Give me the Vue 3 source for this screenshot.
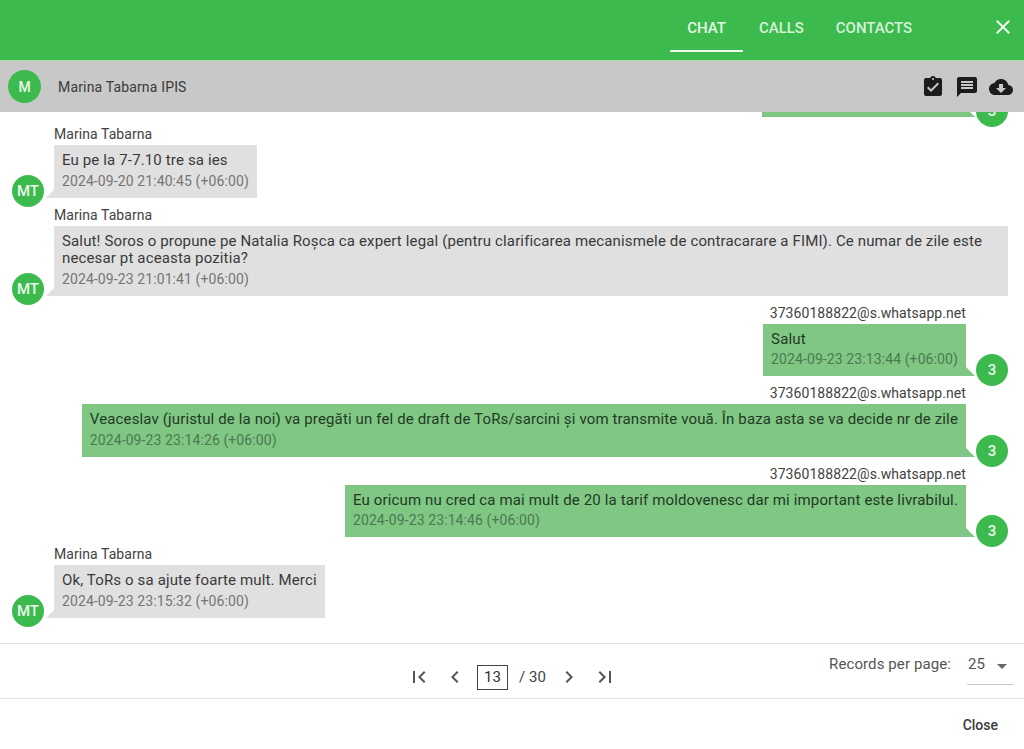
<script setup>
const messages = [
  { side: 'right', name: '', avatar: '3', lines: [], time: '', partial: true },
  { side: 'left', name: 'Marina Tabarna', avatar: 'MT', lines: ['Eu pe la 7-7.10 tre sa ies'], time: '2024-09-20 21:40:45 (+06:00)' },
  { side: 'left', name: 'Marina Tabarna', avatar: 'MT', lines: ['Salut! Soros o propune pe Natalia Roșca ca expert legal (pentru clarificarea mecanismele de contracarare a FIMI). Ce numar de zile este necesar pt aceasta pozitia?'], time: '2024-09-23 21:01:41 (+06:00)' },
  { side: 'right', name: '37360188822@s.whatsapp.net', avatar: '3', lines: ['Salut'], time: '2024-09-23 23:13:44 (+06:00)' },
  { side: 'right', name: '37360188822@s.whatsapp.net', avatar: '3', lines: ['Veaceslav (juristul de la noi) va pregăti un fel de draft de ToRs/sarcini și vom transmite vouă. În baza asta se va decide nr de zile'], time: '2024-09-23 23:14:26 (+06:00)' },
  { side: 'right', name: '37360188822@s.whatsapp.net', avatar: '3', lines: ['Eu oricum nu cred ca mai mult de 20 la tarif moldovenesc dar mi important este livrabilul.'], time: '2024-09-23 23:14:46 (+06:00)' },
  { side: 'left', name: 'Marina Tabarna', avatar: 'MT', lines: ['Ok, ToRs o sa ajute foarte mult. Merci'], time: '2024-09-23 23:15:32 (+06:00)' }
]
const icons = {
  close: 'M19 6.41L17.59 5 12 10.59 6.41 5 5 6.41 10.59 12 5 17.59 6.41 19 12 13.41 17.59 19 19 17.59 13.41 12z',
  task: 'M19 3h-4.18C14.4 1.84 13.3 1 12 1c-1.3 0-2.4.84-2.82 2H5c-1.1 0-2 .9-2 2v14c0 1.1.9 2 2 2h14c1.1 0 2-.9 2-2V5c0-1.1-.9-2-2-2zm-7 0c.55 0 1 .45 1 1s-.45 1-1 1-1-.45-1-1 .45-1 1-1zm-2 14l-4-4 1.41-1.41L10 14.17l6.59-6.59L18 9l-8 8z',
  message: 'M20 2H4c-1.1 0-1.99.9-1.99 2L2 22l4-4h14c1.1 0 2-.9 2-2V4c0-1.1-.9-2-2-2zm-2 12H6v-2h12v2zm0-3H6V9h12v2zm0-3H6V6h12v2z',
  cloud: 'M19.35 10.04C18.67 6.59 15.64 4 12 4 9.11 4 6.6 5.64 5.35 8.04 2.34 8.36 0 10.91 0 14c0 3.31 2.69 6 6 6h13c2.76 0 5-2.24 5-5 0-2.64-2.05-4.78-4.65-4.96zM17 13l-5 5-5-5h3V9h4v4h3z',
  first: 'M18.41 16.59L13.82 12l4.59-4.59L17 6l-6 6 6 6zM6 6h2v12H6z',
  prev: 'M15.41 7.41L14 6l-6 6 6 6 1.41-1.41L10.83 12z',
  next: 'M10 6L8.59 7.41 13.17 12l-4.58 4.59L10 18l6-6z',
  last: 'M5.59 7.41L10.18 12l-4.59 4.59L7 18l6-6-6-6zM16 6h2v12h-2z',
  drop: 'M7 10l5 5 5-5z'
}
</script>

<template>
  <div class="dialog">
    <header class="topbar">
      <nav class="tabs">
        <a class="tab active">Chat</a>
        <a class="tab">Calls</a>
        <a class="tab">Contacts</a>
      </nav>
      <svg class="close-icon" viewBox="0 0 24 24"><path :d="icons.close" /></svg>
    </header>

    <div class="subbar">
      <span class="avatar sub-avatar">M</span>
      <span class="sub-title">Marina Tabarna IPIS</span>
      <div class="sub-actions">
        <svg viewBox="0 0 24 24"><path :d="icons.task" /></svg>
        <svg viewBox="0 0 24 24"><path :d="icons.message" /></svg>
        <svg viewBox="0 0 24 24"><path :d="icons.cloud" /></svg>
      </div>
    </div>

    <main class="messages">
      <div v-for="(m, i) in messages" :key="i" class="row" :class="[m.side, { partial: m.partial }]">
        <div v-if="m.partial" class="line">
          <div class="bubble stub"></div>
          <span class="avatar">{{ m.avatar }}</span>
        </div>
        <template v-else>
          <div class="name">{{ m.name }}</div>
          <div class="line">
            <span v-if="m.side === 'left'" class="avatar">{{ m.avatar }}</span>
            <div class="bubble">
              <div class="text">{{ m.lines[0] }}</div>
              <div class="time">{{ m.time }}</div>
            </div>
            <span v-if="m.side === 'right'" class="avatar">{{ m.avatar }}</span>
          </div>
        </template>
      </div>
    </main>

    <div class="pager">
      <div class="pages">
        <svg class="first" viewBox="0 0 24 24"><path :d="icons.first" /></svg>
        <svg class="prev" viewBox="0 0 24 24"><path :d="icons.prev" /></svg>
        <span class="page-box">13</span>
        <span class="page-total">/ 30</span>
        <svg class="next" viewBox="0 0 24 24"><path :d="icons.next" /></svg>
        <svg class="last" viewBox="0 0 24 24"><path :d="icons.last" /></svg>
      </div>
      <div class="per-page">
        <span class="per-label">Records per page:</span>
        <div class="select">
          <span>25</span>
          <svg viewBox="0 0 24 24"><path :d="icons.drop" /></svg>
        </div>
      </div>
    </div>

    <footer class="actions">
      <button class="close-btn">Close</button>
    </footer>
  </div>
</template>

<style scoped>
.dialog {
  width: 1024px;
  height: 749px;
  display: flex;
  flex-direction: column;
  overflow: hidden;
  background: #fff;
  font-family: Roboto, "Liberation Sans", sans-serif;
  color: #333;
}
.topbar {
  flex: 0 0 61px;
  box-sizing: border-box;
  background: #3dba4e;
  display: flex;
  justify-content: flex-end;
  align-items: flex-start;
  border-bottom: 1px solid #a5dfad;
}
.tabs {
  display: flex;
  margin-right: 63px;
}
.tab {
  display: flex;
  align-items: center;
  justify-content: center;
  height: 52px;
  padding: 6px 16px 0;
  box-sizing: border-box;
  font-size: 15px;
  font-weight: 500;
  letter-spacing: -0.05px;
  text-transform: uppercase;
  color: #d6f3da;
  border-bottom: 2px solid transparent;
}
.tab.active {
  color: #e6f9e8;
  border-bottom-color: #eef9ef;
  width: 73px;
}
.close-icon {
  width: 24px;
  height: 24px;
  fill: #eefaf0;
  margin: 15px 9px 0 0;
}
.subbar {
  flex: 0 0 51px;
  background: #c8c8c8;
  display: flex;
  align-items: center;
  padding: 0 11px 0 8px;
  position: relative;
  z-index: 2;
}
.sub-title {
  margin-left: 17px;
  font-size: 14px;
  letter-spacing: 0.16px;
  color: #3a3a3a;
}
.sub-actions {
  margin-left: auto;
  display: flex;
  gap: 10px;
  align-items: center;
}
.sub-actions svg {
  width: 24px;
  height: 24px;
  fill: #1c1c1c;
}
.avatar {
  flex: 0 0 32px;
  width: 32px;
  height: 32px;
  border-radius: 50%;
  background: #3dba4e;
  color: #e8f8ea;
  display: flex;
  align-items: center;
  justify-content: center;
  font-size: 15px;
  font-weight: 500;
}
.sub-avatar {
  flex-basis: 33px;
  width: 33px;
  height: 33px;
  font-size: 14px;
}
.messages {
  flex: 1 1 0;
  min-height: 0;
  overflow: hidden;
  padding: 0 16px 0 12px;
  border-bottom: 1px solid #e2e2e2;
}
.row { margin-top: 8px; }
.row.partial { margin-top: -46.7px; }
.name {
  height: 20px;
  line-height: 18px;
  font-size: 14px;
  letter-spacing: 0.07px;
  color: #424242;
}
.left .name { padding-left: 42px; }
.right .name {
  text-align: right;
  padding-right: 42px;
}
.line {
  display: flex;
  align-items: flex-end;
  gap: 10px;
}
.right .line { justify-content: flex-end; }
.line .avatar {
  position: relative;
  z-index: 1;
}
.left .line .avatar { margin-bottom: -9px; }
.right .line .avatar { margin-bottom: -10px; }
.bubble {
  position: relative;
  padding: 7px 8px 8px;
  box-sizing: border-box;
  min-height: 52.5px;
  font-size: 15px;
}
.left .bubble { background: #e0e0e0; }
.right .bubble { background: #80c784; }
.bubble.stub { width: 204px; min-height: 52px; }
.bubble::after {
  content: "";
  position: absolute;
  bottom: 0;
  width: 0;
  height: 0;
  border-style: solid;
}
.left .bubble::after {
  left: -8px;
  border-width: 0 0 8px 8px;
  border-color: transparent transparent #e0e0e0 transparent;
}
.right .bubble::after {
  right: -9px;
  border-width: 0 9px 9px 0;
  border-color: transparent transparent #80c784 transparent;
}
.text {
  line-height: 17.5px;
  letter-spacing: 0.14px;
  color: #3a3a3a;
}
.right .text { color: #213a24; }
.time {
  margin-top: 3px;
  line-height: 17px;
  font-size: 14px;
  letter-spacing: 0.1px;
  color: #757575;
}
.right .time { color: #4b7a50; }
.pager {
  flex: 0 0 55px;
  position: relative;
  display: flex;
  align-items: center;
  justify-content: center;
  border-bottom: 1px solid #e2e2e2;
  box-sizing: border-box;
  padding-top: 12px;
}
.pages {
  display: flex;
  align-items: center;
}
.pages svg {
  width: 24px;
  height: 24px;
  fill: #555;
}
.prev { margin-left: 12px; }
.page-box {
  margin-left: 10px;
  width: 31px;
  height: 25px;
  box-sizing: border-box;
  border: 1px solid #444;
  display: flex;
  align-items: center;
  justify-content: center;
  font-size: 15px;
  color: #333;
}
.page-total {
  margin-left: 11px;
  font-size: 15px;
  color: #444;
  letter-spacing: 0.1px;
}
.next { margin-left: 11px; }
.last { margin-left: 12px; }
.per-page {
  position: absolute;
  right: 10px;
  top: 0;
  display: flex;
  align-items: flex-start;
}
.per-label {
  margin-top: 11px;
  font-size: 15px;
  letter-spacing: 0.1px;
  color: #555;
}
.select {
  margin-left: 16px;
  width: 47px;
  height: 41px;
  box-sizing: border-box;
  border-bottom: 1px solid #c8c8c8;
  display: flex;
  align-items: flex-start;
  justify-content: space-between;
  padding: 11px 0 0 1px;
  font-size: 15px;
  letter-spacing: 0.1px;
  color: #555;
}
.select svg {
  width: 24px;
  height: 24px;
  fill: #666;
  margin-top: -1px;
}
.actions {
  flex: 0 0 50px;
  display: flex;
  justify-content: flex-end;
  align-items: center;
  padding: 2px 26px 0 0;
  box-sizing: border-box;
}
.close-btn {
  border: 0;
  padding: 0;
  background: none;
  font-family: inherit;
  font-size: 14px;
  font-weight: 500;
  color: #3a3a3a;
}
</style>
